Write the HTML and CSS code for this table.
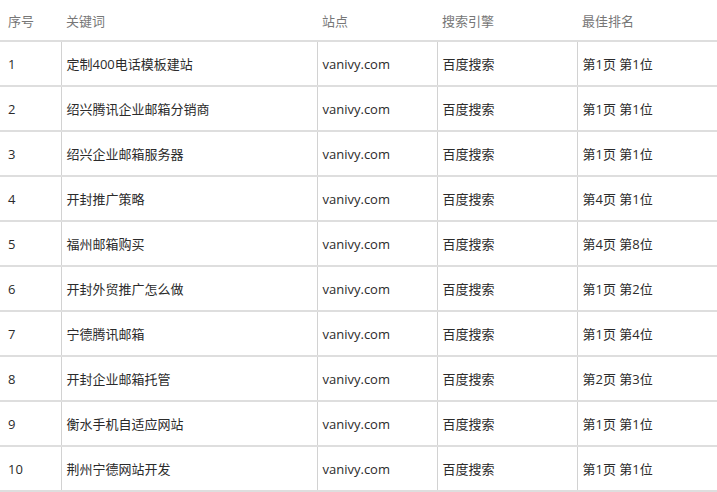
FILE: index.html
```html
<!DOCTYPE html>
<html lang="zh-CN">
<head>
<meta charset="utf-8">
<title>排名</title>
<link rel="stylesheet" href="styles.css">
</head>
<body>
<table class="rank-table">
  <colgroup>
    <col class="c-no"><col class="c-kw"><col class="c-site"><col class="c-engine"><col class="c-rank">
  </colgroup>
  <thead>
    <tr><th>序号</th><th>关键词</th><th>站点</th><th>搜索引擎</th><th>最佳排名</th></tr>
  </thead>
  <tbody>
    <tr><td>1</td><td>定制400电话模板建站</td><td>vanivy.com</td><td>百度搜索</td><td>第1页 第1位</td></tr>
    <tr><td>2</td><td>绍兴腾讯企业邮箱分销商</td><td>vanivy.com</td><td>百度搜索</td><td>第1页 第1位</td></tr>
    <tr><td>3</td><td>绍兴企业邮箱服务器</td><td>vanivy.com</td><td>百度搜索</td><td>第1页 第1位</td></tr>
    <tr><td>4</td><td>开封推广策略</td><td>vanivy.com</td><td>百度搜索</td><td>第4页 第1位</td></tr>
    <tr><td>5</td><td>福州邮箱购买</td><td>vanivy.com</td><td>百度搜索</td><td>第4页 第8位</td></tr>
    <tr><td>6</td><td>开封外贸推广怎么做</td><td>vanivy.com</td><td>百度搜索</td><td>第1页 第2位</td></tr>
    <tr><td>7</td><td>宁德腾讯邮箱</td><td>vanivy.com</td><td>百度搜索</td><td>第1页 第4位</td></tr>
    <tr><td>8</td><td>开封企业邮箱托管</td><td>vanivy.com</td><td>百度搜索</td><td>第2页 第3位</td></tr>
    <tr><td>9</td><td>衡水手机自适应网站</td><td>vanivy.com</td><td>百度搜索</td><td>第1页 第1位</td></tr>
    <tr><td>10</td><td>荆州宁德网站开发</td><td>vanivy.com</td><td>百度搜索</td><td>第1页 第1位</td></tr>
  </tbody>
</table>
</body>
</html>
```

FILE: styles.css
```css
html, body {
  margin: 0;
  padding: 0;
  background: #fff;
}
body {
  font-family: "Open Sans", "Noto Sans CJK SC", sans-serif;
  font-size: 13px;
  color: #2b2b2b;
}
.rank-table {
  border-collapse: collapse;
  table-layout: fixed;
  width: 717px;
}
.c-no { width: 61px; }
.c-kw { width: 256px; }
.c-site { width: 120px; }
.c-engine { width: 140px; }
.c-rank { width: 140px; }
.rank-table th {
  font-weight: normal;
  color: #777;
  text-align: left;
  height: 40px;
  padding: 0 0 0 5px;
  border-bottom: 2px solid #dedede;
  vertical-align: middle;
}
.rank-table td {
  height: 43px;
  padding: 0 0 0 5px;
  border-bottom: 2px solid #dedede;
  border-left: 1px solid #d2d2d2;
  vertical-align: middle;
  white-space: nowrap;
}
.rank-table th:first-child,
.rank-table td:first-child {
  padding-left: 8px;
  border-left: none;
}
```
